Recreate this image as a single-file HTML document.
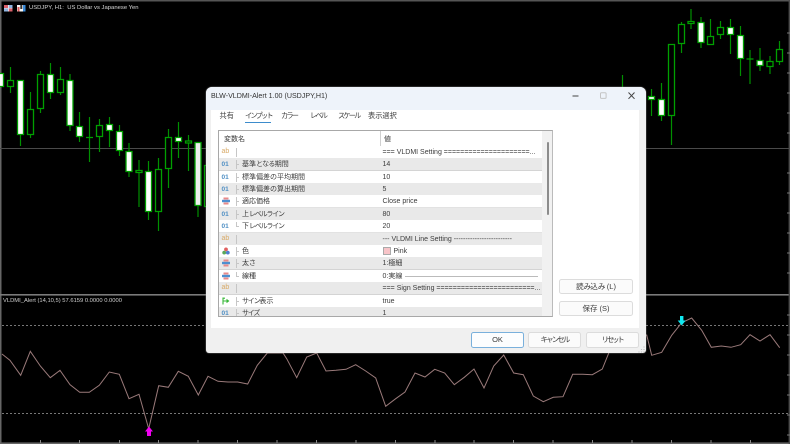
<!DOCTYPE html>
<html lang="ja">
<head>
<meta charset="utf-8">
<title>BLW-VLDMI-Alert</title>
<style>
html,body{margin:0;padding:0;background:#000;}
#root{position:relative;width:790px;height:444px;overflow:hidden;background:#000;font-family:"Liberation Sans","Noto Sans CJK JP",sans-serif;filter:blur(.3px);}
#root svg{position:absolute;display:block;}
.t{position:absolute;white-space:pre;line-height:10px;height:10px;}
#dlg{position:absolute;left:206px;top:87px;width:440px;height:266px;background:#f0f0f0;border-radius:6px 6px 3px 3px;box-shadow:0 0 1.5px #999;overflow:hidden;color:#3c3c3c;font-size:7px;}
#bar{position:absolute;left:0;top:0;width:440px;height:23px;background:#eef3fa;}
#pane{position:absolute;left:5px;top:23px;width:428px;height:218px;background:#fff;}
#tbl{position:absolute;left:12px;top:43px;width:335px;height:187px;background:#fff;border:1px solid #a8a8a8;border-right-color:#bbb;box-sizing:border-box;overflow:hidden;}
.r{position:absolute;left:0;width:323px;height:12px;}
.g{background:#e9e9e9;border-bottom:1px solid #d4d4d4;height:12px;}
.w{background:#fff;border-bottom:1px solid #e2e2e2;height:12px;}
.n{position:absolute;left:2.5px;top:2px;font-size:6.5px;font-weight:bold;color:#4f8fc4;line-height:10px;}
.a{position:absolute;left:2.5px;top:1px;font-size:7px;color:#d9ab68;line-height:10px;}
.l{position:absolute;left:23px;top:2px;font-size:7px;line-height:10px;white-space:pre;}
.v{position:absolute;left:163.5px;top:2px;font-size:7px;line-height:10px;white-space:pre;}
.k{letter-spacing:-1.2px;}
.h{letter-spacing:-.7px;}
.tv{position:absolute;left:16.5px;top:2px;width:1px;height:9px;background:#c6c6c6;}
.th{position:absolute;left:17px;top:6px;width:3px;height:1px;background:#c6c6c6;}
.ic{position:absolute;left:2.5px;top:2px;width:8px;height:8px;}
.b{position:absolute;box-sizing:border-box;background:#fbfbfb;border:1px solid #dcdcdc;border-radius:2.5px;text-align:center;font-size:7.5px;color:#3c3c3c;line-height:13px;}
.tab{position:absolute;top:24px;font-size:7.2px;line-height:10px;white-space:pre;color:#3c3c3c;}
.tab.k{letter-spacing:-1.8px;}
</style>
</head>
<body>
<div id="root">
<svg style="left:0;top:0" width="790" height="444" viewBox="0 0 790 444">
<rect x="0" y="0" width="790" height="1.5" fill="#555"/>
<rect x="0" y="0" width="1.5" height="444" fill="#666"/>
<rect x="0" y="148" width="790" height="1" fill="#4a4a4a"/>
<rect x="0" y="294" width="790" height="1.6" fill="#7a7a7a"/>
<rect x="0" y="442.4" width="790" height="1.6" fill="#666"/>
<rect x="788.6" y="0" width="1.4" height="444" fill="#4c4c4c"/>
<path d="M787 33h3M787 53h3M787 73h3M787 93h3M787 113h3M787 133h3M787 173h3M787 193h3M787 213h3M787 233h3M787 253h3M787 273h3M787 315h3M787 335h3M787 355h3M787 375h3M787 395h3M787 415h3M787 435h3" stroke="#777" stroke-width="1"/>
<path d="M40.5 440v3M79.5 440v3M119.5 440v3M158.5 440v3M198 440v3M237.5 440v3M277 440v3M316.5 440v3M356 440v3M395.5 440v3M435 440v3M474 440v3M513.5 440v3M553 440v3M592.5 440v3M632 440v3M671.5 440v3M711 440v3M750.5 440v3" stroke="#888" stroke-width="1"/>
<g stroke="#009000" stroke-width="1.2" fill="none">
<path d="M10.5 67V93M20.5 80V146M30.5 92V138M40.5 71V113M50.5 63V99M60.5 67V95M70 74V131M79.5 112V142M89.5 117V162M99.5 119V152M109.5 117V147M119.5 125V156M129 143V177M139 160V207M148.5 161V220M158.5 158V231M168.5 129V188M178.5 122V158M188.5 135V171M198 142V217M622.5 75V88M651.5 89V116M661.5 83V121M671.5 116V145M681.5 22V53M691 9V29M701 17V48M710.5 19V45M720.5 21V39M730.5 19V54M740.5 26V76M750 50V84M760 48V71M770 56V74M779.5 41V65"/>
</g>
<g stroke="#00a000" stroke-width="1.3" fill="#000">
<path d="M7.5 80.5h6v6h-6zM27.5 109.5h6v25h-6zM37.5 74.5h6v34h-6zM57.5 79.5h6v13h-6zM96.5 125.5h6v11h-6zM165.5 137.5h6v31h-6zM155.5 169.5h6v42h-6zM204.5 165.5h6v41h-6zM668.5 44.5h6v71h-6zM678.5 24.5h6v19h-6zM688 21.5h6v2h-6zM707.5 36.5h6v8h-6zM717.5 27.5h6v7h-6zM767 61.5h6v5h-6zM776.5 49.5h6v12h-6zM136 170.5h6v2h-6zM185.5 141h6v2h-6z"/>
</g>
<g stroke="#00a000" stroke-width="1.3" fill="#fff">
<path d="M-1.5 73.5h5v13h-5zM17.5 80.5h6v54h-6zM47.5 74.5h6v18h-6zM67 80.5h6v45h-6zM76.5 126.5h6v10h-6zM106.5 124.5h6v6h-6zM116.5 131.5h6v19h-6zM126 151.5h6v20h-6zM145.5 171.5h6v40h-6zM175.5 137.5h6v4h-6zM648.5 96.5h6v3h-6zM658.5 99.5h6v16h-6zM698 22.5h6v20h-6zM727.5 27.5h6v7h-6zM737.5 35.5h6v23h-6zM757 60.5h6v5h-6z"/>
<path d="M195 142.5h6v63h-6z" fill="#eee"/>
</g>
<path d="M86 137.5h7M746.5 59h7" stroke="#00a000" stroke-width="1.3" fill="none"/>
<path d="M2 325.5H790M2 413.5H790" stroke="#777" stroke-width="1" stroke-dasharray="2 2" fill="none"/>
<path d="M2 354L10 360.3L20.7 375.3L30.3 351.3L40.3 366L50.3 377.7L60 370.3L70 384.7L79.7 392.3L89.3 392.3L99.3 385.3L109.3 372L119.3 374.3L129 398.7L139 394.3L148.7 428.7L158.7 385.7L168.3 387.3L178.3 371.3L188.3 376.3L198.3 395L208 376.3L218 381.3L228 382L237.7 382L247.7 384L257.3 365.3L267.3 353L283 353L286.7 358.7L296.7 377.7L306.7 357L316.7 353L326 371L336 370.3L346 369.3L355.7 364.7L365.7 371L375.7 378L385.7 406.3L395.7 398.7L405 392L415 373L425 377L434.7 369.3L444.7 373L454.3 384.7L464.3 377.3L474 369L484 388L493.7 366L503.7 355L513.7 373L523.3 374.7L533.3 396L543.3 401.7L553.3 397.3L563 396.7L572.7 374.3L582.7 374.3L592.3 374.7L602.3 369L612 345L646.7 335L651.7 355.3L661.7 352.3L671.7 335.3L681.7 322.7L691.7 318L701.7 330.3L711.3 347.3L721.3 346L731 347.3L740.7 344.7L750 334.7L760 341L770 334.7L779.7 347.7" fill="none" stroke="#9a7a7a" stroke-width="1"/>
<path d="M149 426.5L153 431.5H151V436H147V431.5H145Z" fill="#f000f0"/>
<path d="M680 316H683.4V320.5H685.7L681.7 325.5L677.7 320.5H680Z" fill="#10e8f0"/>
<g>
<rect x="4" y="5" width="8.5" height="6.5" fill="#f2f2f2"/>
<rect x="4" y="5" width="4" height="3" fill="#d9606a"/>
<rect x="8.8" y="8.4" width="3.7" height="3.1" fill="#d9606a"/>
<rect x="8.8" y="5" width="3.7" height="3" fill="#8fb4df"/>
<rect x="4" y="8.4" width="4" height="3.1" fill="#8fb4df"/>
<rect x="17" y="5" width="8.5" height="6.5" fill="#f4f4f4"/>
<rect x="17.5" y="7" width="2" height="4.5" fill="#d85858"/>
<rect x="20.3" y="5" width="2" height="4" fill="#333"/>
<rect x="23" y="5" width="2.5" height="6.5" fill="#3a8ad8"/>
</g>
</svg>
<div class="t" style="left:29px;top:3px;font-size:5.9px;color:#d8d8d8;">USDJPY, H1:  US Dollar vs Japanese Yen</div>
<div class="t" style="left:3px;top:296px;font-size:5.8px;color:#d0d0d0;">VLDMI_Alert (14,10,5) 57.6159 0.0000 0.0000</div>

<div id="dlg">
<div id="bar"></div>
<div id="pane"></div>
<div class="t" style="left:5px;top:4px;font-size:7.1px;color:#333;">BLW-VLDMI-Alert 1.00 (USDJPY,H1)</div>
<svg style="left:360px;top:4px" width="76" height="10" viewBox="0 0 76 10">
<path d="M6.5 5H12.5" stroke="#444" stroke-width="1"/>
<rect x="34.5" y="1.8" width="5.6" height="5.6" rx="1" fill="none" stroke="#c4c4c4" stroke-width="1"/>
<path d="M62.5 1.5L68.5 7.8M68.5 1.5L62.5 7.8" stroke="#444" stroke-width="1" fill="none"/>
</svg>
<div class="tab" style="left:13.5px;">共有</div>
<div class="tab k" style="left:39px;">インプット</div>
<div style="position:absolute;left:39px;top:35px;width:26px;height:1.2px;background:#3d8ccc;"></div>
<div class="tab k" style="left:75px;">カラー</div>
<div class="tab k" style="left:104px;">レベル</div>
<div class="tab k" style="left:132px;">スケール</div>
<div class="tab" style="left:162px;">表示選択</div>

<div id="tbl">
<div class="t" style="left:5px;top:4px;font-size:7px;">変数名</div>
<div class="t" style="left:165px;top:4px;font-size:7px;">値</div>
<div style="position:absolute;left:161px;top:0;width:1px;height:15px;background:#d0d0d0;"></div>

<div class="r w" style="top:15px;"><span class="a">ab</span><i class="tv"></i><span class="v" style="top:1.5px">=== VLDMI Setting =====================...</span></div>
<div class="r g" style="top:27px;"><span class="n">01</span><i class="tv"></i><i class="th"></i><span class="l">基準<span class="h">となる</span>期間</span><span class="v">14</span></div>
<div class="r w" style="top:40px;"><span class="n">01</span><i class="tv"></i><i class="th"></i><span class="l">標準偏差の平均期間</span><span class="v">10</span></div>
<div class="r g" style="top:52px;"><span class="n">01</span><i class="tv"></i><i class="th"></i><span class="l">標準偏差の算出期間</span><span class="v">5</span></div>
<div class="r w" style="top:64px;"><svg class="ic" viewBox="0 0 8 8"><rect x="1.5" y="0.5" width="5" height="2" fill="#e98a8a"/><rect x="0" y="2.8" width="8" height="2.4" fill="#4f8fd0"/><rect x="1.5" y="5.5" width="5" height="2" fill="#e98a8a"/></svg><i class="tv"></i><i class="th"></i><span class="l">適応価格</span><span class="v">Close price</span></div>
<div class="r g" style="top:77px;"><span class="n">01</span><i class="tv"></i><i class="th"></i><span class="l">上<span class="k">レベルライン</span></span><span class="v">80</span></div>
<div class="r w" style="top:89px;"><span class="n">01</span><i class="tv" style="height:5px"></i><i class="th"></i><span class="l">下<span class="k">レベルライン</span></span><span class="v">20</span></div>
<div class="r g" style="top:102px;"><span class="a">ab</span><i class="tv"></i><span class="v" style="top:1.5px">--- VLDMI Line Setting -------------------------</span></div>
<div class="r w" style="top:114px;"><svg class="ic" viewBox="0 0 8 8"><circle cx="4" cy="2.4" r="1.9" fill="#e06060"/><circle cx="2.2" cy="5.6" r="1.9" fill="#5aa85a"/><circle cx="5.8" cy="5.6" r="1.9" fill="#4f7fd0"/></svg><i class="tv"></i><i class="th"></i><span class="l">色</span><span style="position:absolute;left:164px;top:1.5px;width:8px;height:8.5px;background:#f8c4c8;border:.5px solid #aaa;box-sizing:border-box;"></span><span class="v" style="left:174.5px">Pink</span></div>
<div class="r g" style="top:126px;"><svg class="ic" viewBox="0 0 8 8"><rect x="1.5" y="0.5" width="5" height="2" fill="#e98a8a"/><rect x="0" y="2.8" width="8" height="2.4" fill="#4f8fd0"/><rect x="1.5" y="5.5" width="5" height="2" fill="#e98a8a"/></svg><i class="tv"></i><i class="th"></i><span class="l">太さ</span><span class="v">1:極細</span></div>
<div class="r w" style="top:139px;"><svg class="ic" viewBox="0 0 8 8"><rect x="1.5" y="0.5" width="5" height="2" fill="#e98a8a"/><rect x="0" y="2.8" width="8" height="2.4" fill="#4f8fd0"/><rect x="1.5" y="5.5" width="5" height="2" fill="#e98a8a"/></svg><i class="tv" style="height:5px"></i><i class="th"></i><span class="l">線種</span><span class="v">0:実線</span><span style="position:absolute;left:186px;top:6px;width:133px;height:1px;background:#bbb;"></span></div>
<div class="r g" style="top:151px;"><span class="a">ab</span><i class="tv"></i><span class="v" style="top:1.5px">=== Sign Setting ========================...</span></div>
<div class="r w" style="top:164px;"><svg class="ic" viewBox="0 0 8 8"><path d="M1 .5V7.5M1 4H6M4.5 2.5L6.5 4L4.5 5.5M1 1.2H3" stroke="#38b838" stroke-width="1.1" fill="none"/></svg><i class="tv"></i><i class="th"></i><span class="l"><span class="k">サイン</span>表示</span><span class="v">true</span></div>
<div class="r g" style="top:176px;height:11px;border:0;"><span class="n">01</span><i class="tv"></i><i class="th"></i><span class="l"><span class="k">サイズ</span></span><span class="v">1</span></div>

<div style="position:absolute;left:323px;top:0;width:11px;height:186px;background:#f1f1f1;"></div>
<div style="position:absolute;left:328px;top:11px;width:1.6px;height:73px;background:#8c8c8c;border-radius:1px;"></div>
</div>

<div class="b" style="left:353px;top:192px;width:74px;height:15px;">読<span class="h">み</span>込<span class="h">み</span> (L)</div>
<div class="b" style="left:353px;top:214px;width:74px;height:15px;">保存 (S)</div>
<div class="b" style="left:265px;top:245px;width:53px;height:16px;border-color:#79b0dc;background:#fcfdfe;line-height:14px;">OK</div>
<div class="b" style="left:322px;top:245px;width:53px;height:16px;line-height:14px;letter-spacing:-1.9px;">キャンセル</div>
<div class="b" style="left:379.5px;top:245px;width:53px;height:16px;line-height:14px;letter-spacing:-2.2px;">リセット</div>
<svg style="left:432px;top:258px" width="8" height="8" viewBox="0 0 8 8"><path d="M6 1.5v1M3.5 4v1M6 4v1M1 6.5v1M3.5 6.5v1M6 6.5v1" stroke="#bdbdbd" stroke-width="1.2"/></svg>
</div>
</div>
</body>
</html>
